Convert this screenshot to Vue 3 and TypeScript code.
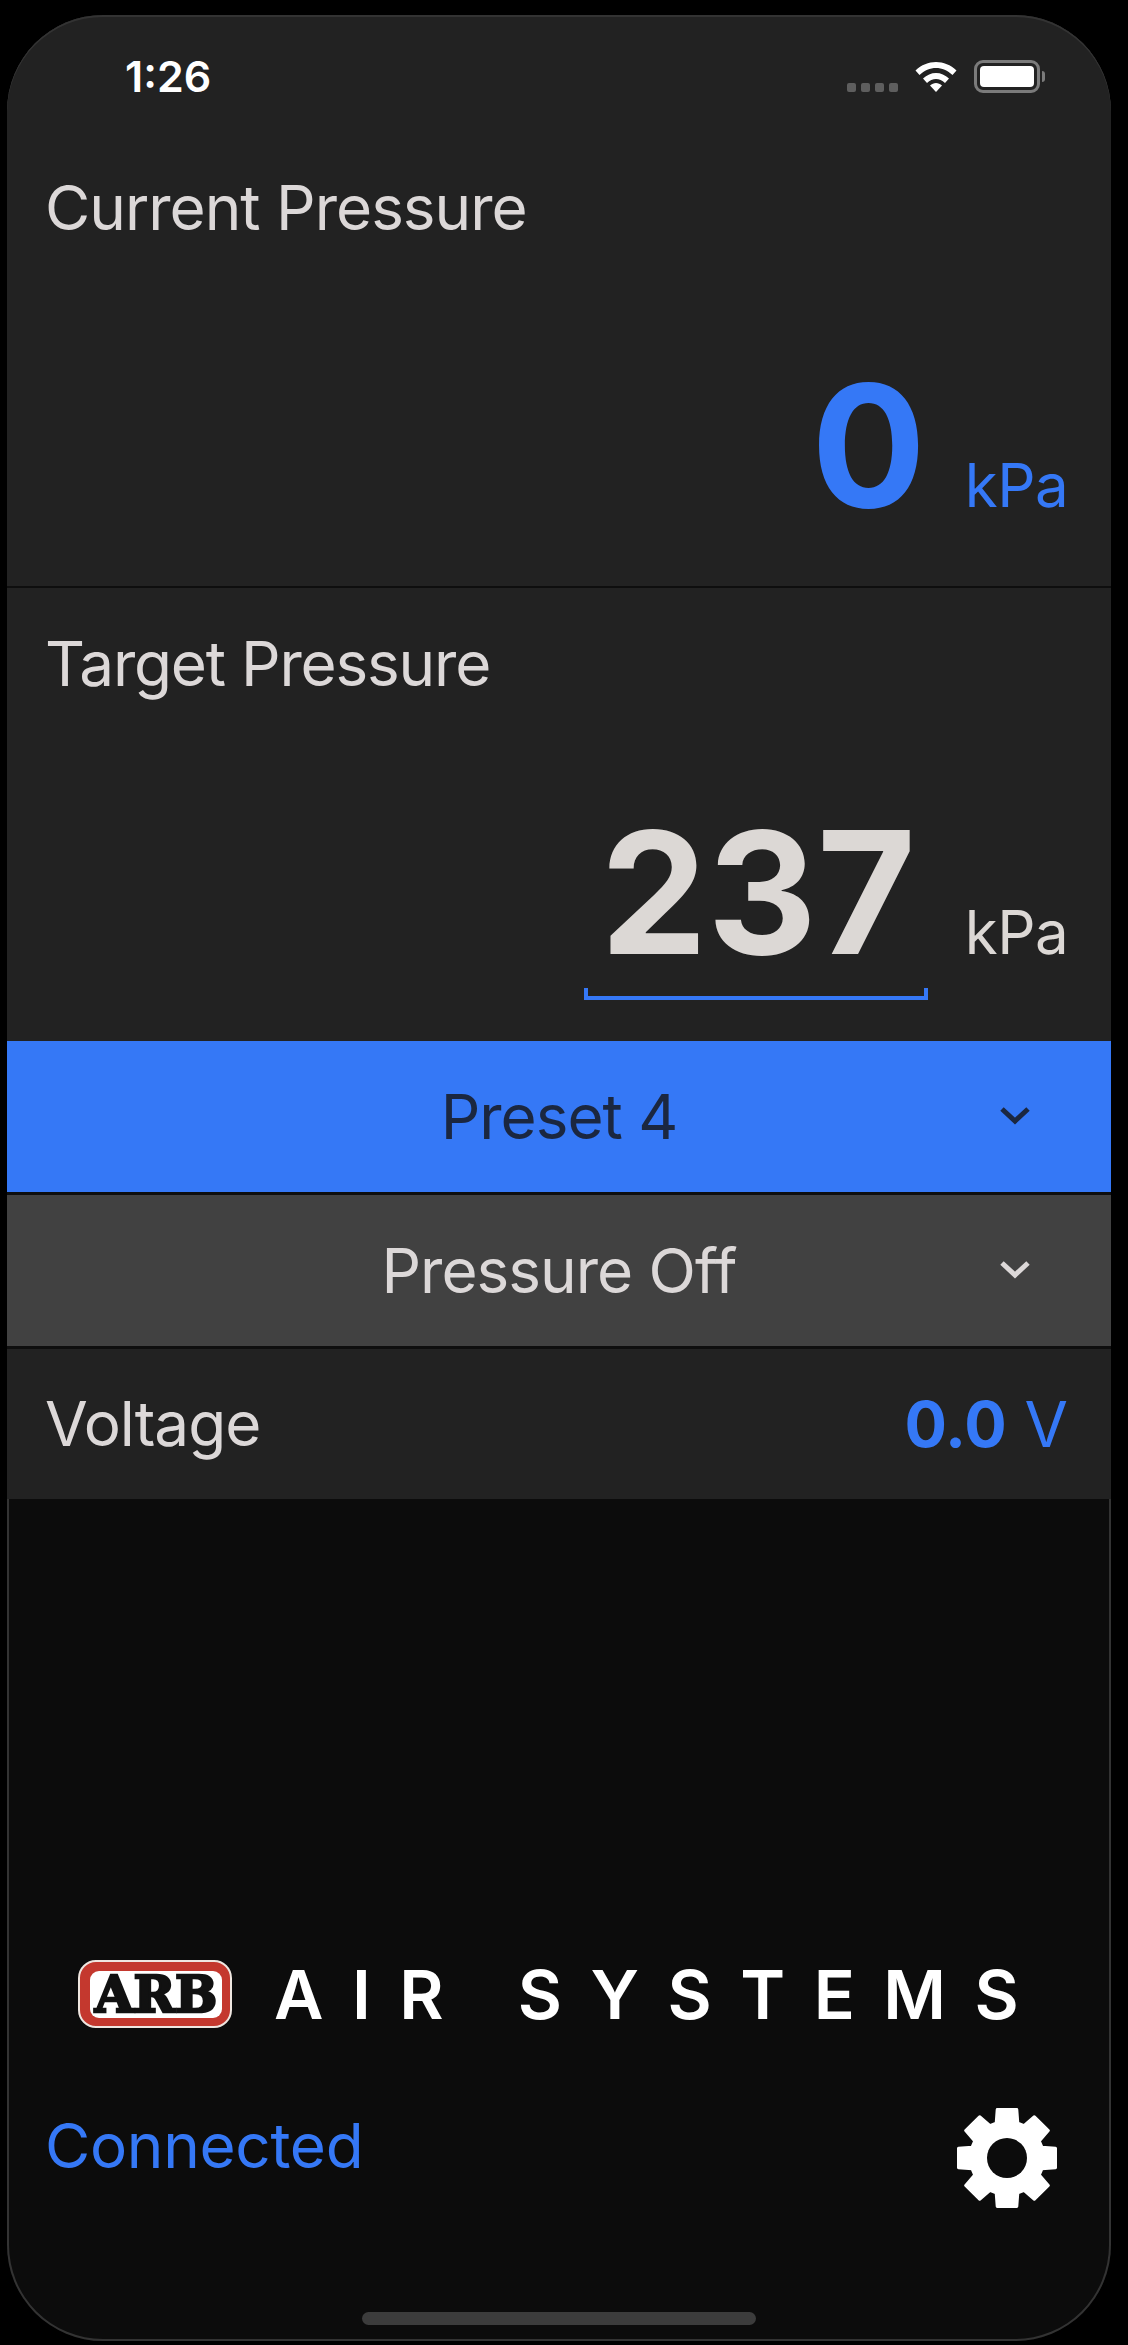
<script setup lang="ts">
import { computed } from 'vue'

// eight toothed gear, built from polar points
const gearPath = computed(() => {
  const cx = 52, cy = 52
  const outer = 49.5, root = 36.5
  const pts: string[] = []
  for (let i = 0; i < 8; i++) {
    const a = (i * Math.PI) / 4 - Math.PI / 2
    const add = (r: number, d: number) => {
      const x = cx + r * Math.cos(a + d)
      const y = cy + r * Math.sin(a + d)
      pts.push(`${x.toFixed(1)},${y.toFixed(1)}`)
    }
    add(root, -0.3)
    add(outer, -0.2)
    add(outer, 0.2)
    add(root, 0.3)
  }
  return 'M' + pts.join(' L') + ' Z'
})
</script>

<template>
  <div class="screen">
    <div class="phone">
      <section class="panel current">
        <div class="status">
          <span class="clock">1:26</span>
          <div class="status-icons">
            <span class="dots"><i></i><i></i><i></i><i></i></span>
            <svg class="wifi" viewBox="0 0 44 32">
              <path d="M1.5 10.5C13 -1 31 -1 42.5 10.5L38.5 15C29 5.5 15 5.5 5.5 15Z" fill="#fff" />
              <path d="M9 18.5C16.5 11 27.5 11 35 18.5L31 23C25.5 17.5 18.5 17.5 13 23Z" fill="#fff" />
              <path d="M16 25.5C19.5 22 24.5 22 28 25.5L22 32Z" fill="#fff" />
            </svg>
            <span class="battery"><span class="cell"></span></span>
            <span class="nub"></span>
          </div>
        </div>
        <div class="label">Current Pressure</div>
        <div class="reading">
          <span class="big blue">0</span>
          <span class="unit blue">kPa</span>
        </div>
      </section>

      <section class="panel target">
        <div class="label">Target Pressure</div>
        <div class="reading">
          <span class="input">
            <span class="big light">237</span>
          </span>
          <span class="unit light">kPa</span>
        </div>
      </section>

      <button class="select preset">
        <span>Preset 4</span>
        <svg class="chev" viewBox="0 0 32 20"><path d="M3 4L16 16L29 4" /></svg>
      </button>
      <button class="select mode">
        <span>Pressure Off</span>
        <svg class="chev" viewBox="0 0 32 20"><path d="M3 4L16 16L29 4" /></svg>
      </button>

      <section class="panel voltage">
        <span class="label">Voltage</span>
        <span class="volts"><b>0.0</b> V</span>
      </section>

      <div class="bottom">
        <div class="brand">
          <svg class="logo" viewBox="0 0 154 68">
            <rect x="1" y="1" width="152" height="66" rx="17" fill="#c4382e" stroke="#efe6e0" stroke-width="2" />
            <rect x="12" y="11" width="132" height="47" rx="9" fill="#fff" />
            <text x="78" y="52" text-anchor="middle" class="logo-text">ARB</text>
          </svg>
          <span class="air">AIR SYSTEMS</span>
        </div>
        <div class="foot">
          <span class="conn">Connected</span>
          <svg class="gear" viewBox="0 0 104 104">
            <path :d="gearPath" fill="#fff" stroke="#fff" stroke-width="3" stroke-linejoin="round" />
            <circle cx="52" cy="52" r="20" fill="#0c0c0c" />
          </svg>
        </div>
        <div class="home"></div>
      </div>
    </div>
  </div>
</template>

<style scoped>
.screen {
  width: 1128px;
  height: 2345px;
  box-sizing: border-box;
  padding: 15px 17px 4px 7px;
  background: #000;
  font-family: Inter, "Liberation Sans", sans-serif;
}
.phone {
  height: 100%;
  display: flex;
  flex-direction: column;
  overflow: hidden;
  border-radius: 96px;
  background: #0c0c0c;
  box-shadow: inset 0 0 0 2px #333;
}
.panel {
  background: #222;
  flex-shrink: 0;
}
.current {
  height: 573px;
  border-radius: 96px 96px 0 0;
  border-bottom: 2px solid #0e0e0e;
  box-sizing: border-box;
  box-shadow: inset 0 2px 0 #333;
}
.status {
  display: flex;
  justify-content: space-between;
  align-items: center;
  height: 36px;
  padding: 43px 66px 0 118px;
}
.clock {
  color: #fff;
  font-size: 43px;
  font-weight: 600;
}
.status-icons {
  display: flex;
  align-items: center;
  position: relative;
}
.dots {
  display: flex;
  gap: 5px;
  margin-right: 16px;
  padding-top: 22px;
}
.dots i {
  width: 9px;
  height: 9px;
  border-radius: 2px;
  background: #5e5e5e;
}
.wifi {
  width: 44px;
  height: 32px;
  margin-right: 16px;
}
.battery {
  display: block;
  width: 66px;
  height: 33px;
  box-sizing: border-box;
  border: 3px solid #7b7b7b;
  border-radius: 9px;
  padding: 3px;
}
.cell {
  display: block;
  height: 100%;
  background: #fff;
  border-radius: 4px;
}
.nub {
  width: 3px;
  height: 11px;
  margin-left: 2px;
  background: #7b7b7b;
  border-radius: 0 3px 3px 0;
}
.label {
  color: #dcd8d8;
  font-size: 62px;
  letter-spacing: -1px;
  line-height: 72px;
}
.current .label {
  margin: 78px 0 0 38px;
}
.reading {
  display: flex;
  justify-content: flex-end;
  align-items: baseline;
  padding-right: 43px;
}
.current .reading {
  margin-top: 106px;
}
.big {
  font-size: 170px;
  font-weight: 700;
  line-height: 190px;
}
.unit {
  font-size: 60px;
  letter-spacing: -0.6px;
  margin-left: 42px;
}
.current .unit {
  margin-left: 39px;
}
.blue {
  color: #3578f6;
}
.light {
  color: #dcd8d5;
}
.target {
  height: 453px;
  padding-top: 40px;
  box-sizing: border-box;
}
.target .label {
  margin-left: 38px;
  letter-spacing: -1.2px;
}
.target .reading {
  margin-top: 97px;
}
.input {
  display: block;
  position: relative;
  padding: 0 12px 0 16px;
  margin-right: -5px;
}
.input::after {
  content: "";
  position: absolute;
  left: 0;
  right: 0;
  bottom: -13px;
  height: 12px;
  box-sizing: border-box;
  border: 4px solid #3578f6;
  border-top: 0;
}
.select {
  display: flex;
  align-items: center;
  justify-content: center;
  position: relative;
  flex-shrink: 0;
  width: 100%;
  height: 151px;
  border: 0;
  border-bottom: 3px solid #0e0e0e;
  box-sizing: content-box;
  padding: 0;
  font-family: inherit;
  font-size: 62px;
  letter-spacing: -1px;
}
.preset {
  background: #3578f6;
  color: #1b2740;
}
.mode {
  background: #414141;
  color: #dcd8d8;
}
.chev {
  position: absolute;
  right: 80px;
  top: 64px;
  width: 32px;
  height: 20px;
  fill: none;
  stroke: currentColor;
  stroke-width: 5;
}
.voltage {
  display: flex;
  justify-content: space-between;
  align-items: center;
  height: 150px;
  padding: 0 43px 0 38px;
}
.volts {
  color: #3578f6;
  font-size: 63px;
}
.volts b {
  font-weight: 700;
}
.bottom {
  flex: 1;
  display: flex;
  flex-direction: column;
  justify-content: flex-end;
}
.brand {
  display: flex;
  align-items: center;
  padding-left: 71px;
  height: 68px;
}
.logo {
  width: 154px;
  height: 68px;
  flex-shrink: 0;
}
.logo-text {
  font-family: "DejaVu Serif", serif;
  font-size: 50px;
  font-weight: 700;
  fill: #111;
  stroke: #111;
  stroke-width: 2.5px;
}
.air {
  margin-left: 42px;
  color: #fff;
  font-size: 68px;
  font-weight: 600;
  letter-spacing: 28.5px;
  white-space: pre;
}
.foot {
  display: flex;
  justify-content: space-between;
  align-items: center;
  margin-top: 78px;
  padding: 0 52px 0 38px;
}
.conn {
  color: #3578f6;
  font-size: 62px;
  letter-spacing: -0.3px;
  margin-top: -26px;
}
.gear {
  width: 104px;
  height: 104px;
}
.home {
  align-self: center;
  width: 394px;
  height: 13px;
  margin: 102px 0 16px;
  border-radius: 7px;
  background: #3c3c3c;
}
</style>
